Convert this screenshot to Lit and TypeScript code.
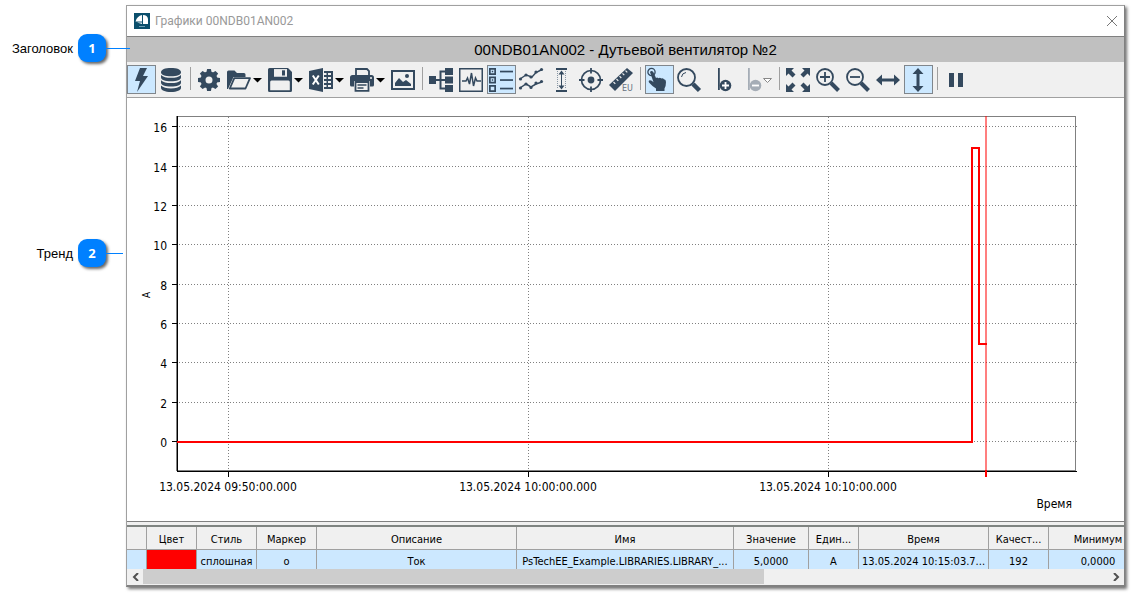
import { LitElement, html, css, svg, nothing, SVGTemplateResult } from "lit";
import { customElement, property, state } from "lit/decorators.js";
import { classMap } from "lit/directives/class-map.js";

const INK = "#34495e";

const icons: Record<string, SVGTemplateResult> = {
  bolt: svg`<path d="M11 0h7l-4 8h5L8 24l3-11H6z"/>`,
  database: svg`<path d="M2 4.2C2 1.5 6 0 12 0s10 1.500 10 4.200S18 8.200 12 8.200 2 6.900 2 4.200z"/>
    <path d="M2 7c2 2 5.500 2.800 10 2.800S20 9 22 7v2.300c0 2.700-4 4-10 4s-10-1.300-10-4z"/>
    <path d="M2 12.300c2 2 5.500 2.800 10 2.800s8-.8 10-2.800v2.300c0 2.700-4 4-10 4s-10-1.300-10-4z"/>
    <path d="M2 17.600c2 2 5.500 2.800 10 2.800s8-.8 10-2.800v2.200c0 2.700-4 4.200-10 4.200S2 22.500 2 19.800z"/>`,
  gear: svg`<g transform="translate(12 12)"><circle r="6" fill="none" stroke=${INK} stroke-width="5"/>
    ${[0, 45, 90, 135, 180, 225, 270, 315].map((a) => svg`<path d="M-2.600-7.500L-1.900-11h3.800l.7 3.500z" transform="rotate(${a})"/>`)}</g>`,
  folder: svg`<path d="M0 21V4q0-1.500 1.500-1.500h6L10 5h7q1.500 0 1.500 1.500V9H6.500L1 21z"/>
    <path d="M7.300 10.200H23L18.500 20.500H2.800z" fill="#f0f0f0" stroke=${INK} stroke-width="1.800" stroke-linejoin="round"/>`,
  save: svg`<path fill-rule="evenodd" d="M1.500 0H20l4 4v18.500q0 1.500-1.500 1.500h-21Q0 24 0 22.500v-21Q0 0 1.500 0zM6 1.300v7.200h13V1.300zM3.500 12.500Q2.200 12.500 2.200 14v8.300h19.600V14q0-1.500-1.300-1.500z"/>
    <path d="M6 1.300h13v7.200H6z" fill="#f0f0f0"/><path d="M14 2.300h3v5.200h-3z"/>`,
  excel: svg`<path d="M0 3l14-3v24L0 21z"/><path d="M15 3h9v18h-9v-2h2.500v-2H15v-2h2.500v-2H15v-2h2.500V9H15V7h2.500V5H15z"/>
    <path d="M19 5h3v2h-3zM19 9h3v2h-3zM19 13h3v2h-3zM19 17h3v2h-3z" fill="#f0f0f0"/>
    <path d="M3.800 7.500l6 9M9.800 7.500l-6 9" fill="none" stroke="#fff" stroke-width="2"/>`,
  print: svg`<path d="M6 7V1h11l2 2v4" fill="none" stroke=${INK} stroke-width="1.800"/>
    <path d="M2.500 7h19Q24 7 24 9.500V17q0 1.500-1.500 1.500H20V13H4v5.500H1.500Q0 18.500 0 17V9.500Q0 7 2.500 7z"/>
    <path d="M5.500 14h13v8.900h-13z" fill="#f0f0f0" stroke=${INK} stroke-width="1.800"/>
    <path d="M7.500 17h9M7.500 20h6" stroke=${INK} stroke-width="1.500"/><circle cx="21" cy="10" r="1" fill="#f0f0f0"/>`,
  picture: svg`<path fill-rule="evenodd" d="M0 2h24v20H0zM2 4v16h20V4z"/>
    <path d="M4 18v-3l4-5 4 4 3-2 5 4v2z"/><circle cx="16" cy="8" r="2"/>`,
  tree: svg`<path d="M0 8h7v8H0zM16 0h8v7h-8zM16 8.500h8v7h-8zM16 17h8v7h-8z"/>
    <path d="M6 12h11M17 3.500h-5.500v17H17" fill="none" stroke=${INK} stroke-width="2"/>`,
  pulse: svg`<path fill-rule="evenodd" d="M0 0h24v24H0zM1.500 1.500v21h21v-21z"/>
    <path d="M3 13h4l1.500-3 2 6L12.500 5l2 13 2-8 1.500 3h4" fill="none" stroke=${INK} stroke-width="1.500"/>`,
  list: svg`${[0, 8.5, 17].map((y) => svg`<path fill-rule="evenodd" d="M0 ${y}h7v7H0zM1.700 ${y + 1.7}v3.600h3.600v-3.600z"/><path d="M11 ${y + 2.7}h13v1.700H11z"/>`)}
    <path d="M2.800 2.800h1.400v1.400H2.800zM2.800 11.300h1.400v1.400H2.800z"/>`,
  curves: svg`<path d="M1 11l6-4 6 2 4-4.500 6-3M1 20l6-4 5 3 5-3 6-2" fill="none" stroke=${INK} stroke-width="1.500"/>
    ${[[1.5, 11], [7, 7], [12, 9], [17, 4], [22.5, 1.5], [1.5, 20], [7, 16], [12, 19.5], [17, 15], [22.5, 13.5]].map(([x, y]) => svg`<circle cx=${x} cy=${y} r="1.600"/>`)}`,
  range: svg`<path d="M7 0h11v2H7zM7 22h11v2H7zM12 5h1v14h-1z"/><path d="M12.500 2.500l3 4h-6zM12.500 21.500l3-4h-6z"/>
    <path d="M8.500 3v18M16.500 3v18" fill="none" stroke="#8896a4" stroke-dasharray="1 1"/>`,
  target: svg`<circle cx="12" cy="12" r="9.500" fill="none" stroke=${INK} stroke-width="1.700"/><circle cx="12" cy="12" r="3.400"/>
    <path d="M12 0v5.500M12 18.500V24M0 12h5.500M18.500 12H24" stroke=${INK} stroke-width="1.800"/>`,
  ruler: svg`<path d="M0 17L18 0l6 5L6 23z"/><path d="M4.500 14l1.800 1.800M7.500 11l1.800 1.800M10.500 8.200l1.800 1.800M13.500 5.400l1.800 1.800M16.500 2.600l1.800 1.800" stroke="#f0f0f0" stroke-width="1.200"/>
    <text class="unit" x="13" y="23">EU</text>`,
  hand: svg`<circle cx="4.500" cy="4" r="3.600" fill="none" stroke=${INK} stroke-width="1.300"/>
    <path d="M3 4q1.500-2 3.300 0L9 10q1-1 2.500.2 1.500-1 2.800.3 1.500-.6 2.700.7 2 .3 2 2.800 0 4-1.500 6.500V23H9v-2.500Q5 18 2 14.500q-1-2 1-2.200 1.800 0 3.500 2z"/>`,
  magnifier: svg`<circle cx="9.500" cy="9.500" r="8.500" fill="none" stroke=${INK} stroke-width="1.800"/><path d="M4.500 9q.5-4 4.500-4.500" fill="none" stroke=${INK}/>
    <path d="M16 16l6.500 6.500" stroke=${INK} stroke-width="4.500"/>`,
  markerAdd: svg`<path d="M11 0h1.800v22H11z"/><circle cx="18.500" cy="17.500" r="5.800"/><path d="M15 17.500h7M18.500 14v7" stroke="#fff" stroke-width="1.800"/>`,
  markerDel: svg`<g fill="#a5adb6"><path d="M11 0h1.800v22H11z"/><circle cx="18.500" cy="17.500" r="5.800"/></g><path d="M15 17.500h7" stroke="#fff" stroke-width="1.800"/>`,
  expand: svg`${[0, 90, 180, 270].map((a) => svg`<path d="M0 0h8L5.500 2.500l4 4-3 3-4-4L0 8z" transform="rotate(${a} 12 12)"/>`)}`,
  zoomIn: svg`<circle cx="9" cy="9" r="8" fill="none" stroke=${INK} stroke-width="1.800"/><path d="M4 9h10M9 4v10" stroke=${INK} stroke-width="1.800"/><path d="M15 15l7.500 7.500" stroke=${INK} stroke-width="4"/>`,
  zoomOut: svg`<circle cx="9" cy="9" r="8" fill="none" stroke=${INK} stroke-width="1.800"/><path d="M4 9h10" stroke=${INK} stroke-width="1.800"/><path d="M15 15l7.500 7.500" stroke=${INK} stroke-width="4"/>`,
  horizontal: svg`<path d="M0 12l6-5.500v4h12v-4l6 5.500-6 5.500v-4H6v4z"/>`,
  vertical: svg`<path d="M12 0l5.500 6h-4v12h4L12 24l-5.500-6h4V6h-4z"/>`,
  pause: svg`<path d="M5 5h5v14H5zM14 5h5v14h-5z"/>`,
};

type Tool = { icon: string; label: string; on?: boolean; menu?: boolean; off?: boolean } | null;

const TOOLS: Tool[] = [
  { icon: "bolt", label: "Оперативный режим", on: true },
  { icon: "database", label: "Архив" },
  null,
  { icon: "gear", label: "Настройки" },
  { icon: "folder", label: "Открыть", menu: true },
  { icon: "save", label: "Сохранить", menu: true },
  { icon: "excel", label: "Экспорт", menu: true },
  { icon: "print", label: "Печать", menu: true },
  { icon: "picture", label: "Изображение" },
  null,
  { icon: "tree", label: "Дерево" },
  { icon: "pulse", label: "Сигнал" },
  { icon: "list", label: "Легенда", on: true },
  { icon: "curves", label: "Кривые" },
  { icon: "range", label: "Диапазон" },
  { icon: "target", label: "Центрировать" },
  { icon: "ruler", label: "Единицы" },
  null,
  { icon: "hand", label: "Выбор", on: true },
  { icon: "magnifier", label: "Лупа" },
  { icon: "markerAdd", label: "Добавить маркер" },
  { icon: "markerDel", label: "Удалить маркер", menu: true, off: true },
  null,
  { icon: "expand", label: "Показать всё" },
  { icon: "zoomIn", label: "Увеличить" },
  { icon: "zoomOut", label: "Уменьшить" },
  { icon: "horizontal", label: "По горизонтали" },
  { icon: "vertical", label: "По вертикали", on: true },
  null,
  { icon: "pause", label: "Пауза" },
];

@customElement("trend-toolbar")
export class TrendToolbar extends LitElement {
  static styles = css`
    :host {
      display: flex;
      gap: 1px;
      padding: 3px 0;
      background: #f0f0f0;
      border-bottom: 1px solid #a0a0a0;
    }
    .tool {
      display: flex;
      flex: none;
      align-items: flex-start;
      gap: 2px;
      box-sizing: border-box;
      width: 29px;
      height: 29px;
      padding: 2px 0 0 1px;
      border: 1px solid transparent;
      background: none;
    }
    .menu {
      width: 40px;
    }
    .on {
      background: #cce8ff;
      border-color: #80868c;
    }
    .glyph {
      flex: none;
      width: 24px;
      height: 24px;
      fill: #34495e;
      overflow: visible;
    }
    .arrow {
      flex: none;
      width: 9px;
      height: 24px;
    }
    .sep {
      flex: none;
      width: 7px;
      height: 23px;
      margin-top: 2px;
      background: linear-gradient(#a0a0a0, #a0a0a0) 3px 0 / 1px 100% no-repeat;
    }
    .unit {
      font: 8px "DejaVu Sans", sans-serif;
      fill: #66727e;
    }
  `;

  render() {
    return TOOLS.map((t) =>
      t === null
        ? html`<span class="sep"></span>`
        : html`<button
            class=${classMap({ tool: true, on: !!t.on, menu: !!t.menu })}
            aria-label=${t.label}
            ?disabled=${!!t.off}
          >
            <svg class="glyph" viewBox="0 0 24 24">${icons[t.icon]}</svg>
            ${t.menu
              ? html`<svg class="arrow" viewBox="0 0 9 24">
                  ${t.off
                    ? svg`<path d="M.5 10.500h8l-4 4z" fill="#fff" stroke="#888"/>`
                    : svg`<path d="M0 10h9l-4.500 4.500z" fill="#000"/>`}
                </svg>`
              : nothing}
          </button>`
    );
  }
}

@customElement("trend-chart")
export class TrendChart extends LitElement {
  @state() private w = 997;
  @state() private h = 423;
  private observer?: ResizeObserver;

  static styles = css`
    :host {
      display: block;
      flex: 1 1 0;
      min-height: 240px;
      overflow: hidden;
      background: #fff;
    }
    .plot {
      display: block;
      shape-rendering: crispEdges;
    }
    .grid {
      stroke: #808080;
      stroke-dasharray: 1 2;
    }
    .frame {
      fill: none;
      stroke: #808080;
    }
    .axis {
      fill: none;
      stroke: #000;
    }
    .series {
      fill: none;
      stroke: #f00;
      stroke-width: 2;
    }
    .cursor {
      stroke: #f00;
      stroke-width: 2;
      stroke-opacity: 0.5;
    }
    .foot {
      stroke: #f00;
      stroke-width: 2;
    }
    .label {
      font: 12px "DejaVu Sans Condensed", "DejaVu Sans", sans-serif;
      font-stretch: condensed;
      fill: #000;
    }
    .small {
      font-size: 10px;
    }
    .end {
      text-anchor: end;
    }
    .mid {
      text-anchor: middle;
    }
  `;

  connectedCallback() {
    super.connectedCallback();
    this.observer = new ResizeObserver(() => {
      this.w = this.clientWidth;
      this.h = this.clientHeight;
    });
    this.observer.observe(this);
  }

  disconnectedCallback() {
    this.observer?.disconnect();
    super.disconnectedCallback();
  }

  render() {
    const { w, h } = this;
    const left = 50;
    const top = 18;
    const right = w - 49;
    const bottom = h - 50;
    const px = (right - left) / 1797;
    const unit = (bottom - top) / 18.04;
    // Time is in seconds from the left edge of the plot.
    const x = (s: number) => Math.round(left + s * px);
    const y = (v: number) => Math.floor(bottom - (v + 1.5) * unit + 0.1);
    const values = [0, 2, 4, 6, 8, 10, 12, 14, 16];
    const times: [number, string][] = [
      [102, "13.05.2024 09:50:00.000"],
      [702, "13.05.2024 10:00:00.000"],
      [1302, "13.05.2024 10:10:00.000"],
    ];
    const now = x(1618);
    return html`<svg class="plot" width=${w} height=${h} role="img" aria-label="Тренд">
      <path class="frame" d="M${left - 0.5} ${top + 0.5}H${right + 0.5}V${bottom - 0.5}H${left - 0.5}z" />
      ${values.map(
        (v) => svg`<path class="grid" d="M${left + 2} ${y(v) + 0.5}H${right + 2}"/>
          <path class="axis" d="M${left - 5} ${y(v) + 0.5}H${left}"/>
          <text class="label end" x=${left - 10} y=${y(v) + 6}>${v}</text>`
      )}
      ${times.map(
        ([s, text]) => svg`<path class="grid" d="M${x(s) + 0.5} ${top + 1}V${bottom}"/>
          <path class="axis" d="M${x(s) + 0.5} ${bottom}V${bottom + 6}"/>
          <text class="label mid" x=${x(s)} y=${bottom + 20}>${text}</text>`
      )}
      <path class="axis" d="M${left + 0.5} ${top}V${bottom + 0.5}H${right + 2}" />
      <path class="cursor" d="M${now} ${top}V${bottom - 1}" />
      <path class="foot" d="M${now} ${bottom - 1}V${bottom + 6}" />
      <path class="series" d="M${left} ${y(0) + 1}H${x(1590)}V${y(14.9)}H${x(1604)}V${y(5) + 1}H${now + 1}" />
      <text class="label end" x=${right - 3} y=${h - 13}>Время</text>
      <text class="label small mid" transform="translate(23 ${Math.round((top + bottom) / 2) + 1}) rotate(-90)">A</text>
    </svg>`;
  }
}

const COLUMNS: [string, number, string][] = [
  ["", 20, ""],
  ["Цвет", 50, ""],
  ["Стиль", 60, "сплошная"],
  ["Маркер", 60, "o"],
  ["Описание", 200, "Ток"],
  ["Имя", 217, "PsTechEE_Example.LIBRARIES.LIBRARY_..."],
  ["Значение", 75, "5,0000"],
  ["Един...", 50, "A"],
  ["Время", 130, "13.05.2024 10:15:03.7..."],
  ["Качест...", 60, "192"],
  ["Минимум", 99, "0,0000"],
];

@customElement("trend-legend")
export class TrendLegend extends LitElement {
  static styles = css`
    :host {
      display: block;
      background: #f0f0f0;
      border-top: 1px solid #808080;
      padding-top: 3px;
    }
    .view {
      height: 42px;
      overflow: hidden;
      border-top: 2px solid #7f8481;
    }
    .table {
      table-layout: fixed;
      width: 1021px;
      border-collapse: separate;
      border-spacing: 0;
      font: 11px "DejaVu Sans Condensed", "DejaVu Sans", sans-serif;
      font-stretch: condensed;
    }
    .head,
    .cell {
      box-sizing: border-box;
      padding: 0;
      border-right: 1px solid #a0a0a0;
      text-align: center;
      font-weight: normal;
      white-space: nowrap;
      overflow: hidden;
    }
    .head {
      height: 23px;
      padding-top: 2px;
      border-bottom: 1px solid #a0a0a0;
      background: #f0f0f0;
    }
    .cell {
      height: 22px;
      background: #cce8ff;
    }
    .swatch {
      background: #f00;
    }
    .scroll {
      display: flex;
      height: 16px;
    }
    .step {
      flex: none;
      width: 16px;
      padding: 0;
      border: 0;
      background: none;
    }
    .chev {
      display: block;
      margin: auto;
      width: 8px;
      height: 8px;
      fill: none;
      stroke: #505050;
      stroke-width: 2;
    }
    .track {
      flex: 1;
    }
    .thumb {
      width: 64.4%;
      height: 15px;
      background: #cdcdcd;
    }
  `;

  render() {
    return html`<div class="view">
        <table class="table">
          <colgroup>
            ${COLUMNS.map(([, width]) => html`<col style="width:${width}px" />`)}
          </colgroup>
          <thead>
            <tr>
              ${COLUMNS.map(([name]) => html`<th class="head" scope="col">${name}</th>`)}
            </tr>
          </thead>
          <tbody>
            <tr>
              ${COLUMNS.map(
                ([, , value], i) => html`<td class=${classMap({ cell: true, swatch: i === 1 })}>${value}</td>`
              )}
            </tr>
          </tbody>
        </table>
      </div>
      <div class="scroll">
        <button class="step" aria-label="Влево"><svg class="chev" viewBox="0 0 8 8"><path d="M7 0L3 4l4 4" /></svg></button>
        <div class="track"><div class="thumb"></div></div>
        <button class="step" aria-label="Вправо"><svg class="chev" viewBox="0 0 8 8"><path d="M2 0l4 4-4 4" /></svg></button>
      </div>`;
  }
}

@customElement("callout-note")
export class CalloutNote extends LitElement {
  @property() text = "";
  @property() number = "";
  @property({ type: Boolean }) long = false;

  static styles = css`
    :host {
      display: flex;
      align-items: center;
      height: 28px;
      font: 13px "Liberation Sans", Arial, sans-serif;
    }
    .text {
      flex: none;
      width: 73px;
      text-align: right;
    }
    .badge {
      flex: none;
      width: 28px;
      height: 28px;
      margin-left: 5px;
      border-radius: 9px;
      background: #0080ff;
      box-shadow: 2px 2px 3px rgba(0, 0, 0, 0.6);
      color: #fff;
      font: bold 13px/28px "Open Sans", sans-serif;
      text-align: center;
    }
    .lead {
      flex: none;
      width: 17px;
      height: 1px;
      background: #0080ff;
    }
    .long {
      width: 24px;
    }
  `;

  render() {
    return html`<span class="text">${this.text}</span><span class="badge">${this.number}</span
      ><span class=${classMap({ lead: true, long: this.long })}></span>`;
  }
}

@customElement("app-root")
export class AppRoot extends LitElement {
  static styles = css`
    :host {
      display: flex;
      box-sizing: border-box;
      height: 100vh;
      min-height: 420px;
      padding: 5px 8px 10px 0;
      background: #fff;
      color: #000;
    }
    .notes {
      display: flex;
      flex: none;
      flex-direction: column;
      gap: 177px;
      width: 126px;
      padding-top: 29px;
      z-index: 1;
    }
    .window {
      display: flex;
      flex: 1;
      flex-direction: column;
      min-width: 0;
      box-sizing: border-box;
      border: 1px solid #a0a0a0;
      border-right-color: #808080;
      border-bottom: 2px solid #808080;
      box-shadow: 2px 2px 3px rgba(0, 0, 0, 0.55);
    }
    .caption {
      display: flex;
      align-items: center;
      gap: 5px;
      height: 30px;
      padding: 0 7px;
      font: 12px Roboto, "Open Sans", sans-serif;
      color: #999;
    }
    .name {
      flex: 1;
    }
    .logo {
      width: 16px;
      height: 16px;
    }
    .close {
      padding: 0;
      border: 0;
      background: none;
    }
    .cross {
      display: block;
      width: 10px;
      height: 10px;
      stroke: #777;
    }
    .title {
      margin: 0;
      border-top: 1px solid #808080;
      background: #c0c0c0;
      font: 15px/25px "Liberation Sans", Arial, sans-serif;
      text-align: center;
    }
  `;

  render() {
    return html`<aside class="notes">
        <callout-note text="Заголовок" number="1" long></callout-note>
        <callout-note text="Тренд" number="2"></callout-note>
      </aside>
      <main class="window">
        <header class="caption">
          <svg class="logo" viewBox="0 0 16 16">
            <path d="M0 0h16v16H0z" fill="#0b4f6c" />
            <path d="M1.500 8.500Q3 3 8 2v6.500zM9 2q4.500 0 5 4v5H9zM3 9.500h5V11z" fill="#fff" />
            <path d="M5 13.500h6" stroke="#6fa0b5" />
          </svg>
          <span class="name">Графики 00NDB01AN002</span>
          <button class="close" aria-label="Закрыть">
            <svg class="cross" viewBox="0 0 10 10"><path d="M0 0l10 10M10 0L0 10" /></svg>
          </button>
        </header>
        <h1 class="title">00NDB01AN002 - Дутьевой вентилятор №2</h1>
        <trend-toolbar></trend-toolbar>
        <trend-chart></trend-chart>
        <trend-legend></trend-legend>
      </main>`;
  }
}
